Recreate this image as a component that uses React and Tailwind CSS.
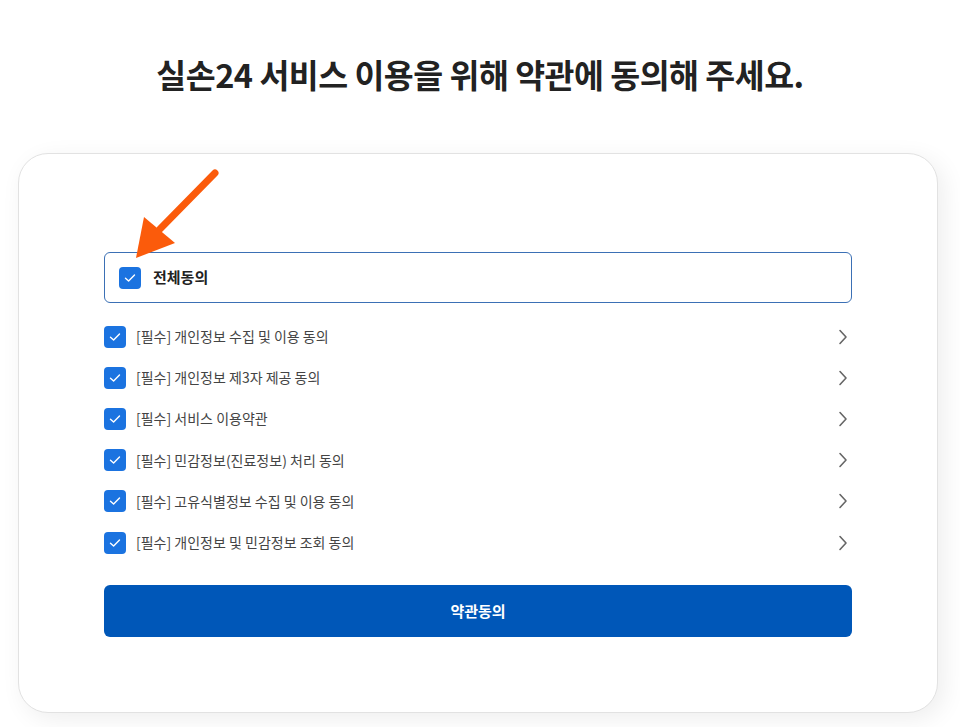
import React, { useState } from 'react';

const TERMS = [
  '[필수] 개인정보 수집 및 이용 동의',
  '[필수] 개인정보 제3자 제공 동의',
  '[필수] 서비스 이용약관',
  '[필수] 민감정보(진료정보) 처리 동의',
  '[필수] 고유식별정보 수집 및 이용 동의',
  '[필수] 개인정보 및 민감정보 조회 동의',
];

function Check({ checked }) {
  return (
    <span
      className={
        'flex h-[22px] w-[22px] shrink-0 items-center justify-center rounded-[4px] ' +
        (checked ? 'bg-[#1b73e0]' : 'border border-[#c8c8c8] bg-white')
      }
    >
      {checked && (
        <svg width="12" height="10" viewBox="0 0 12 10" fill="none">
          <path d="M1.5 5.2L4.6 8L10.5 2" stroke="white" strokeWidth="1.4" strokeLinecap="round" strokeLinejoin="round" />
        </svg>
      )}
    </span>
  );
}

export default function App() {
  const [checks, setChecks] = useState(TERMS.map(() => true));
  const all = checks.every(Boolean);

  function toggle(i) {
    setChecks(c => c.map((v, j) => (j === i ? !v : v)));
  }

  return (
    <div className="relative min-h-screen bg-white font-['Noto_Sans_CJK_KR','Noto_Sans',sans-serif] text-[#222]">
      <h1 className="pt-[50px] text-center text-[32.5px] font-bold leading-[48px] tracking-[-0.5px] text-[#222]">
        실손24 서비스 이용을 위해 약관에 동의해 주세요.
      </h1>

      <div className="mx-[18px] mt-[55px] w-[920px] rounded-[30px] border border-[#e2e2e2] bg-white px-[85px] pb-[75px] pt-[98px] shadow-[6px_6px_24px_rgba(0,0,0,0.07)]">
        <button
          type="button"
          onClick={() => setChecks(TERMS.map(() => !all))}
          className="flex h-[51px] w-full items-center gap-3 rounded-[6px] border border-[#3b70b5] px-[14px] text-left"
        >
          <Check checked={all} />
          <span className="text-[15px] font-bold text-[#222]">전체동의</span>
        </button>

        <ul className="mt-[13px]">
          {TERMS.map((t, i) => (
            <li key={t} className="flex h-[41.2px] items-center">
              <button type="button" onClick={() => toggle(i)} className="flex flex-1 items-center gap-[10px] text-left">
                <Check checked={checks[i]} />
                <span className="text-[14px] text-[#444]">{t}</span>
              </button>
              <svg width="10" height="16" viewBox="0 0 10 16" fill="none" className="mr-[4px]">
                <path d="M2 1.5L8 8L2 14.5" stroke="#666" strokeWidth="1.6" strokeLinecap="round" strokeLinejoin="round" />
              </svg>
            </li>
          ))}
        </ul>

        <button
          type="button"
          className="mt-[22px] flex h-[52px] w-full items-center justify-center rounded-[6px] bg-[#0057b8] text-[15px] font-bold text-white"
        >
          약관동의
        </button>
      </div>

      {/* annotation arrow pointing at 전체동의 */}
      <svg className="pointer-events-none absolute left-[130px] top-[165px]" width="95" height="100" viewBox="0 0 95 100">
        <line x1="85" y1="8" x2="30" y2="64" stroke="#fb5b0b" strokeWidth="7" strokeLinecap="round" />
        <polygon points="14,52 45,78 6,93" fill="#fb5b0b" />
      </svg>
    </div>
  );
}
